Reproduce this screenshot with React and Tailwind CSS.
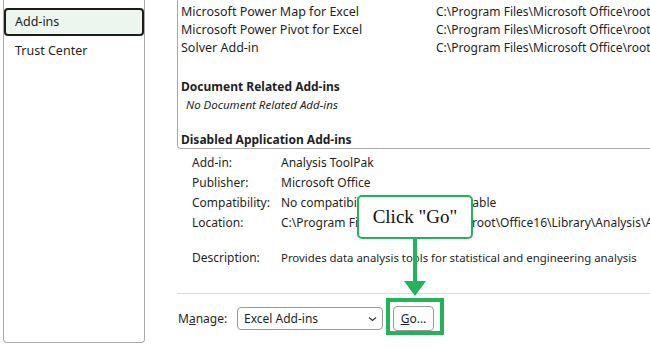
import React from "react";

const addins = [
  "Microsoft Power Map for Excel",
  "Microsoft Power Pivot for Excel",
  "Solver Add-in",
];

const details = [
  ["Add-in:", "Analysis ToolPak"],
  ["Publisher:", "Microsoft Office"],
  ["Compatibility:", "No compatibility information available"],
  ["Location:", "C:\\Program Files\\Microsoft Office\\root\\Office16\\Library\\Analysis\\ANALYS32.XLL"],
];

export default function App() {
  return (
    <div className="relative w-[650px] h-[349px] bg-white overflow-hidden text-[12px] text-[#1f1f1f] font-['Noto_Sans',sans-serif]">
      <div className="flex h-full">
        {/* sidebar */}
        <div className="ml-[3px] w-[142px] h-[343px] border border-t-0 border-[#a9a9a9] rounded-b-[4px] pt-[8px] shrink-0">
          <div className="h-[28px] border-2 border-[#1c1c1c] rounded-[4px] bg-[#edf5ef] flex items-center pl-[9px] text-[12.5px]">
            Add-ins
          </div>
          <div className="h-[30px] flex items-center pl-[11px] text-[12.5px]">Trust Center</div>
        </div>

        {/* main */}
        <div className="ml-[32px] flex-1 min-w-0 whitespace-nowrap overflow-hidden">
          <div className="h-[149px] border-l border-b border-[#a9a9a9] rounded-bl-[4px] pl-[3px] pt-[3px]">
            {addins.map((name) => (
              <div key={name} className="flex h-[18px] items-center">
                <span className="w-[255px] shrink-0 text-[12.5px]">{name}</span>
                <span className="shrink-0 text-[12px]">C:\Program Files\Microsoft Office\root\Office16\Library</span>
              </div>
            ))}
            <div className="mt-[21px] h-[18px] flex items-center font-bold">Document Related Add-ins</div>
            <div className="h-[17px] flex items-center italic pl-[5px] text-[11.5px]">No Document Related Add-ins</div>
            <div className="mt-[18px] h-[18px] flex items-center font-bold">Disabled Application Add-ins</div>
          </div>

          <div className="pl-[15px] pt-[4px]">
            {details.map(([k, v]) => (
              <div key={k} className="flex h-[20px] items-center">
                <span className="w-[89px] shrink-0">{k}</span>
                <span className="shrink-0">{v}</span>
              </div>
            ))}
            <div className="flex h-[20px] items-center mt-[15px]">
              <span className="w-[89px] shrink-0">Description:</span>
              <span className="shrink-0 text-[11.4px]">Provides data analysis tools for statistical and engineering analysis</span>
            </div>
          </div>

          <div className="mt-[25px] border-t border-[#dcdcdc]" />

          <div className="flex items-center pt-[12px] pl-[1px]">
            <span className="w-[59px] shrink-0">
              M<span className="underline">a</span>nage:
            </span>
            <div className="w-[146px] h-[23px] shrink-0 border border-[#9a9a9a] rounded-[4px] flex items-center justify-between pl-[6px] pr-[5px]">
              <span>Excel Add-ins</span>
              <svg width="9" height="6" viewBox="0 0 9 6">
                <path d="M1 1.5 L4.5 4.5 L8 1.5" fill="none" stroke="#333" strokeWidth="1.2" />
              </svg>
            </div>
            <div className="ml-[10px] w-[41px] h-[25px] shrink-0 border border-[#9a9a9a] rounded-[4px] flex items-center justify-center bg-[#fdfdfd]">
              <span>
                <span className="underline">G</span>o...
              </span>
            </div>
          </div>
        </div>
      </div>

      {/* annotation */}
      <div className="absolute left-[357px] top-[195px] w-[116px] h-[44px] border-2 border-[#22b35b] rounded-[5px] bg-white flex items-center justify-center font-['Liberation_Serif',serif] text-[19px] text-[#111]">
        Click "Go"
      </div>
      <div className="absolute left-[413px] top-[239px] w-[4px] h-[43px] bg-[#22b35b]" />
      <svg className="absolute left-[404px] top-[281px]" width="22" height="15" viewBox="0 0 22 15">
        <polygon points="0,0 22,0 11,15" fill="#22b35b" />
      </svg>
      <div className="absolute left-[386px] top-[298px] w-[58px] h-[37px] border-4 border-[#22b35b]" />
    </div>
  );
}
